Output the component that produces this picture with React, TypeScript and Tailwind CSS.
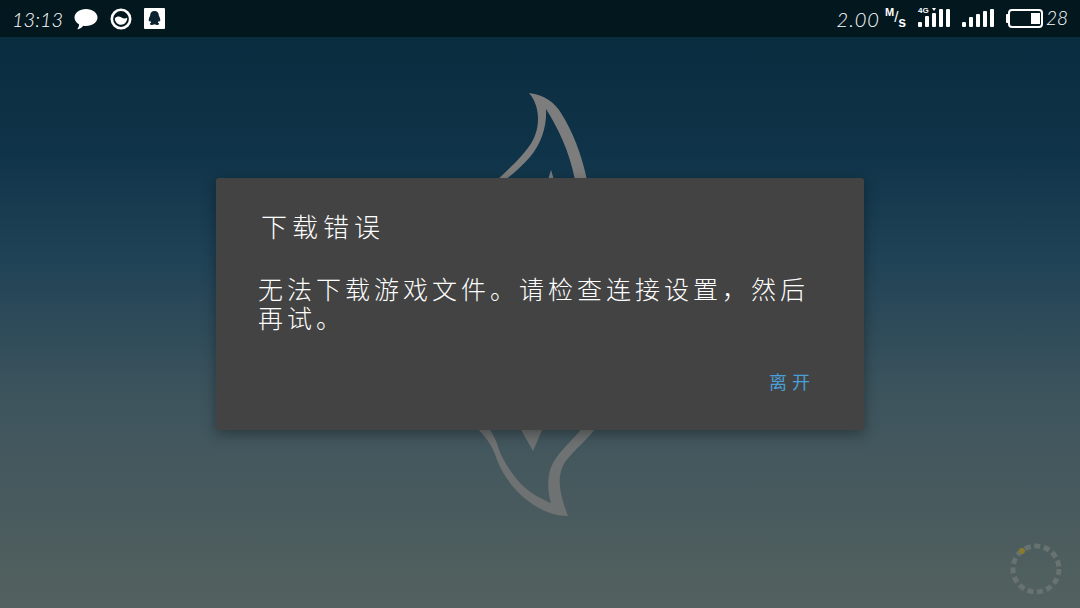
const signalBars = (heights: number[]) => (
  <div className="flex h-[18px] items-end gap-[3px]">
    {heights.map((h, i) => (
      <div key={i} className="w-[4px] rounded-[1px] bg-white" style={{ height: h }} />
    ))}
  </div>
);

const ChatIcon = () => (
  <svg width="24" height="22" viewBox="0 0 24 22">
    <path d="M12 1C18.4 1 23.5 4.8 23.5 9.6C23.5 14.4 18.4 18 12 18C11 18 10.200 17.900 9.300 17.800C8 19.500 5.800 21 4 21.200C3.500 21.200 3.400 20.800 3.700 20.500C4.600 19.400 5.100 17.800 5 16.300C2.200 14.800 0.500 12.400 0.500 9.600C0.500 4.800 5.600 1 12 1Z" fill="#fff" />
  </svg>
);

const CircleIcon = () => (
  <svg width="22" height="22" viewBox="0 0 22 22">
    <circle cx="11" cy="11" r="9.200" fill="none" stroke="#fff" strokeWidth="2.600" />
    <path d="M4.800 10.500C7 7.800 9.500 8.200 11.500 9.500C13.500 10.800 15.500 10.800 17.200 9.800C17.200 14 14.500 16.800 11 16.800C7.500 16.800 5 14 4.800 10.500Z" fill="#fff" />
  </svg>
);

const QQIcon = () => (
  <svg width="21" height="21" viewBox="0 0 21 21">
    <rect width="21" height="21" rx="1" fill="#fff" />
    <path d="M10.500 3C13.300 3 14.800 5 14.900 7.800C15.700 9.200 16.500 11.200 16.200 13C15.900 13.900 15.300 13.300 14.900 12.500C14.700 13.500 14.300 14.200 13.800 14.700C14.900 15.100 15.300 15.600 15 16.300C14.500 17.200 12 17 10.500 16.300C9 17 6.500 17.200 6 16.300C5.700 15.600 6.100 15.100 7.200 14.700C6.700 14.200 6.300 13.500 6.100 12.500C5.700 13.300 5.100 13.900 4.800 13C4.500 11.200 5.300 9.200 6.100 7.800C6.200 5 7.700 3 10.500 3Z" fill="#0b2230" />
  </svg>
);

const BatteryIcon = () => (
  <svg width="38" height="19" viewBox="0 0 38 19">
    <rect x="4" y="1" width="33" height="17" rx="3" fill="none" stroke="#fff" strokeWidth="2" />
    <rect x="1" y="5" width="3" height="9" rx="1" fill="#fff" />
    <rect x="26" y="4" width="9" height="11" fill="#fff" />
  </svg>
);

const LoadingRing = () => (
  <svg className="absolute left-[1006px] top-[539px]" width="60" height="60" viewBox="0 0 60 60">
    <circle cx="30" cy="30" r="23" fill="none" stroke="#687271" strokeWidth="5" strokeDasharray="6 3.630" />
    <circle cx="16" cy="12" r="3" fill="#8a7a2c" />
  </svg>
);

const Logo = () => (
  <svg className="absolute left-[460px] top-[80px]" width="160" height="450" viewBox="460 80 160 450">
    <path d="M529 93C545 95 555 103 561 113C572 130 582 155 587 180L575 180C569 150 558 128 546 109C547 125 542 143 530 157C522 166 513 174 505 180L497 180C510 168 524 155 532 142C540 128 541 107 529 93Z" fill="#7d7d7d" />
    <path d="M551 170L554 180L548 180Z" fill="#7d7d7d" />
    <path d="M477 428L489 428C493 435 497 441 498 447C503 461 511 473 521 484C530 493 541 499 551 503C547 490 547 474 553 463C560 450 573 440 582 428L596 428C586 441 573 451 565 462C557 475 558 490 568 516C550 516 535 507 523 497C511 486 502 473 497 460C494 450 489 440 477 428Z" fill="#6f7272" />
    <path d="M520 428L543 428L533 451Z" fill="#6f7272" />
  </svg>
);

const App = () => {
  return (
    <div className="relative flex h-[608px] w-[1080px] flex-col overflow-hidden bg-[linear-gradient(180deg,#0a2c3f_6%,#0f3348_25%,#1f4256_42%,#3d545d_65%,#4a5b5e_85%,#53625f_100%)] font-['Noto_Sans_CJK_SC','Noto_Sans',sans-serif]">
      <Logo />
      <LoadingRing />

      <div className="relative flex h-[37px] items-center justify-between bg-[#03171f] pl-3 pr-3 text-white">
        <div className="flex items-center">
          <span className="w-[62px] font-['Lato'] text-[20px] font-light italic text-white">13:13</span>
          <div className="flex items-center gap-[12px]">
            <ChatIcon />
            <CircleIcon />
            <QQIcon />
          </div>
        </div>
        <div className="flex items-center">
          <span className="font-['Lato'] text-[20px] font-light italic tracking-[1px] text-white">2.00</span>
          <span className="ml-[5px] flex w-[23px] items-start font-['Liberation_Sans'] text-[11px] font-bold leading-none">
            <span className="mt-[-2px]">M</span>
            <span className="text-[15px] font-normal">/</span>
            <span className="mt-[6px] text-[14px]">s</span>
          </span>
          <div className="relative ml-[10px] mt-[-1px]">
            <span className="absolute left-0 top-[-2px] font-['Liberation_Sans'] text-[8px] font-bold leading-none">4G</span>
            <span className="absolute left-[14px] top-[-1px] h-0 w-0 border-x-[2px] border-t-[3px] border-x-transparent border-t-white" />
            {signalBars([5, 11, 14, 18, 18])}
          </div>
          <div className="ml-[12px] mt-[-1px]">{signalBars([5, 10, 13, 16, 18])}</div>
          <div className="ml-[11px]"><BatteryIcon /></div>
          <span className="ml-[3px] font-['Lato'] text-[19px] font-light italic text-white">28</span>
        </div>
      </div>

      <div className="relative flex flex-1 items-start justify-center pt-[141px]">
        <div className="flex h-[252px] w-[648px] flex-col rounded-[3px] bg-[#434343] pl-[42px] pr-[40px] pt-[30px] shadow-[0_4px_14px_rgba(0,0,0,0.35)]">
          <h2 className="ml-[3px] text-[26px] font-light leading-[36px] tracking-[5px] text-white">下载错误</h2>
          <p className="mt-[30px] text-[25px] font-light leading-[29px] tracking-[4px] text-white">
            无法下载游戏文件。请检查连接设置，然后再试。
          </p>
          <div className="mt-[36px] flex justify-end pr-[9px]">
            <span className="text-[18px] font-normal leading-[26px] tracking-[5px] text-[#4a9fd8]">离开</span>
          </div>
        </div>
      </div>
    </div>
  );
};

export default App;
